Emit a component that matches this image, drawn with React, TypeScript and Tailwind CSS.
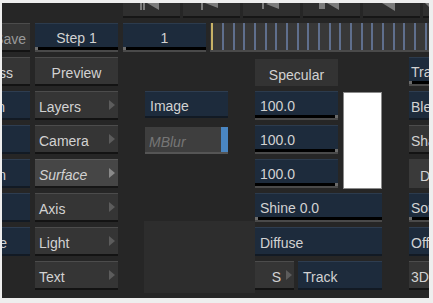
import React from "react";

const font = "font-['Liberation_Sans',Arial,sans-serif] text-[14px] leading-none";
const lbl = "whitespace-nowrap pt-[4px]";

function Arrow({ light = false }: { light?: boolean }) {
  return (
    <svg width="6" height="10" viewBox="0 0 6 10" className="shrink-0">
      <polygon points="0,0 6,5 0,10" fill={light ? "#8a8a8a" : "#5c5c5c"} />
    </svg>
  );
}

function GrayButton({
  label,
  arrow = false,
  active = false,
  className = "",
}: {
  label: string;
  arrow?: boolean;
  active?: boolean;
  className?: string;
}) {
  return (
    <div
      className={`flex items-center justify-between pl-[4px] pr-[3px] border-t border-b-2 ${
        active
          ? "bg-[#464646] border-t-[#5a5a5a] border-b-[#161616] italic"
          : "bg-[#353535] border-t-[#4c4c4c] border-b-[#131313]"
      } ${className}`}
    >
      <span className={lbl}>{label}</span>
      {arrow && <Arrow light={active} />}
    </div>
  );
}

function NavyButton({ label, className = "" }: { label: string; className?: string }) {
  return (
    <div
      className={`flex items-center px-[5px] bg-[#1d2b3c] border-t border-t-[#2e3d50] border-b-2 border-b-[#121a24] ${className}`}
    >
      <span className={lbl}>{label}</span>
    </div>
  );
}

function ValueField({
  label,
  center = false,
  gripRight = false,
  className = "",
}: {
  label: string;
  center?: boolean;
  gripRight?: boolean;
  className?: string;
}) {
  return (
    <div className={`flex flex-col bg-[#1d2b3c] ${className}`}>
      <div
        className={`flex-1 flex items-center border-t border-t-[#2c3b4d] ${
          center ? "justify-center" : "px-[5px]"
        }`}
      >
        <span className={lbl}>{label}</span>
      </div>
      <div className={`h-[3px] bg-black flex ${gripRight ? "justify-end" : ""}`}>
        <div className="w-[3px] h-full bg-[#6a6a6a]" />
      </div>
      <div className="h-[2px] bg-[#4a4a4a]" />
    </div>
  );
}

// clipped on the left side of the window
function EdgeLeft({
  label,
  navy = false,
  dim = false,
  pr,
}: {
  label: string;
  navy?: boolean;
  dim?: boolean;
  pr: string;
}) {
  return (
    <div
      className={`flex items-center justify-end overflow-hidden border-t border-b-2 ${pr} ${
        navy
          ? "bg-[#1d2b3c] border-t-[#2e3d50] border-b-[#121a24]"
          : "bg-[#353535] border-t-[#4c4c4c] border-b-[#131313]"
      } ${dim ? "text-[#9a9a9a]" : ""}`}
    >
      <span className={lbl}>{label}</span>
    </div>
  );
}

// clipped on the right side of the window
function EdgeRight({
  label,
  kind,
  pl = "pl-[2px]",
}: {
  label: string;
  kind: "navy" | "field" | "gray" | "flat";
  pl?: string;
}) {
  if (kind === "field") {
    return (
      <div className="flex flex-col bg-[#1d2b3c] overflow-hidden">
        <div className={`flex-1 flex items-center border-t border-t-[#2c3b4d] ${pl}`}>
          <span className={lbl}>{label}</span>
        </div>
        <div className="h-[3px] bg-black">
          <div className="w-[3px] h-full bg-[#6a6a6a]" />
        </div>
        <div className="h-[2px] bg-[#4a4a4a]" />
      </div>
    );
  }
  const look =
    kind === "navy"
      ? "bg-[#1d2b3c] border-t border-t-[#2e3d50] border-b-2 border-b-[#121a24]"
      : kind === "gray"
      ? "bg-[#353535] border-t border-t-[#4c4c4c] border-b-2 border-b-[#131313]"
      : "bg-[#3a3a3a]";
  return (
    <div className={`flex items-center overflow-hidden ${pl} ${look}`}>
      <span className={lbl}>{label}</span>
    </div>
  );
}

function ToolIcon({ kind }: { kind: number }) {
  const c = "#7c7c7c";
  return (
    <svg width="57" height="13" viewBox="0 0 57 13">
      {kind === 0 && (
        <>
          <rect x="17" y="0" width="2" height="7" fill={c} />
          <rect x="20" y="0" width="2" height="7" fill={c} />
          <polygon points="36,-6 36,7 24,0" fill={c} />
        </>
      )}
      {kind === 1 && (
        <>
          <rect x="18" y="0" width="2" height="7" fill={c} />
          <polygon points="35,-6 35,5 22,0" fill={c} />
        </>
      )}
      {kind === 2 && (
        <>
          <rect x="19" y="0" width="2" height="6" fill={c} />
          <polygon points="36,-5 36,6 23,1" fill={c} />
        </>
      )}
      {kind === 3 && (
        <>
          <rect x="16" y="0" width="6" height="6" fill={c} />
          <polygon points="36,-6 36,7 24,0" fill={c} />
        </>
      )}
      {kind === 4 && <polygon points="32,-6 32,8 19,0" fill={c} />}
      {kind === 5 && <polygon points="10,-6 10,8 2,0" fill={c} />}
    </svg>
  );
}

export default function App() {
  const ticks = Array.from({ length: 20 }, (_, i) => i);

  return (
    <div className={`w-[433px] h-[303px] bg-[#eeeeee] pt-[3px] pl-[2px] ${font} text-[#d2d2d2]`}>
      <div className="w-[427px] h-[295px] bg-[#262626] overflow-hidden flex flex-col">
        {/* transport toolbar, cut off at the top */}
        <div className="flex gap-[3px] pl-[121px] h-[15px] shrink-0">
          {[0, 1, 2, 3, 4, 5].map((k) => (
            <div
              key={k}
              className="w-[57px] shrink-0 h-[15px] bg-[#2f2f2f] border-b-2 border-b-[#161616] overflow-hidden"
            >
              <ToolIcon kind={k} />
            </div>
          ))}
        </div>

        {/* step row */}
        <div className="flex h-[29px] mt-[5px] shrink-0">
          <div className="w-[28px] grid">
            <EdgeLeft label="Save" dim pr="pr-[4px]" />
          </div>
          <ValueField label="Step 1" center className="w-[83px] ml-[5px]" />
          <ValueField label="1" center className="w-[83px] ml-[5px]" />
          <div className="w-[219px] ml-[4px] flex flex-col bg-[#383838]">
            <div className="flex-1 flex">
              <div className="w-[2px] ml-[1px] bg-[#c8b266]" />
              <div className="flex-1 flex justify-between ml-[9px] mr-[2px]">
                {ticks.map((t) => (
                  <div key={t} className="w-[2px] bg-[#5f6f8d]" />
                ))}
              </div>
            </div>
            <div className="h-[2px] bg-[#4a4a4a]" />
          </div>
        </div>

        {/* main grid */}
        <div className="grid grid-cols-[28px_5px_83px_27px_83px_27px_83px_5px_39px_27px_20px] grid-rows-[repeat(7,29px)] gap-y-[5px] mt-[5px]">
          {/* row 3 */}
          <div className="col-start-1 row-start-1 grid">
            <EdgeLeft label="Process" pr="pr-[17px]" />
          </div>
          <div className="col-start-3 row-start-1 flex items-center justify-center bg-[#353535] border-t border-t-[#4c4c4c] border-b-2 border-b-[#131313]">
            <span className={lbl}>Preview</span>
          </div>
          <div className="col-start-7 row-start-1 flex items-center justify-center bg-[#333333] mt-[2px]">
            <span className={lbl}>Specular</span>
          </div>
          <div className="col-start-11 row-start-1 grid">
            <EdgeRight label="Track" kind="field" />
          </div>

          {/* left edge column */}
          <div className="col-start-1 row-start-2 grid">
            <EdgeLeft label="Action" navy pr="pr-[25px]" />
          </div>
          <div className="col-start-1 row-start-3 grid">
            <EdgeLeft label="" navy pr="pr-[4px]" />
          </div>
          <div className="col-start-1 row-start-4 grid">
            <EdgeLeft label="Action" navy pr="pr-[24px]" />
          </div>
          <div className="col-start-1 row-start-5 grid">
            <EdgeLeft label="" navy pr="pr-[4px]" />
          </div>
          <div className="col-start-1 row-start-6 grid">
            <EdgeLeft label="Gauge" navy pr="pr-[23px]" />
          </div>

          {/* node menu */}
          <GrayButton label="Layers" arrow className="col-start-3 row-start-2" />
          <GrayButton label="Camera" arrow className="col-start-3 row-start-3" />
          <GrayButton label="Surface" arrow active className="col-start-3 row-start-4" />
          <GrayButton label="Axis" arrow className="col-start-3 row-start-5" />
          <GrayButton label="Light" arrow className="col-start-3 row-start-6" />
          <GrayButton label="Text" arrow className="col-start-3 row-start-7" />

          {/* middle column */}
          <NavyButton label="Image" className="col-start-5 row-start-2 mb-[2px]" />
          <div className="col-start-5 row-start-3 mt-[2px] flex bg-[#3e3e3e] border-b-2 border-b-[#555555]">
            <div className="flex-1 flex items-center pl-[4px] italic text-[#767676]">
              <span className={lbl}>MBlur</span>
            </div>
            <div className="w-[7px] bg-[#4a86c2]" />
          </div>
          <div className="col-start-5 col-end-7 row-start-6 row-end-8 -mt-[6px] -mb-[3px] -ml-[1px] bg-[#2d2d2d]" />

          {/* specular values */}
          <ValueField label="100.0" gripRight className="col-start-7 row-start-2" />
          <ValueField label="100.0" gripRight className="col-start-7 row-start-3" />
          <ValueField label="100.0" gripRight className="col-start-7 row-start-4" />
          <div className="col-start-9 row-start-2 row-end-5 mt-[1px] mb-[-1px] bg-white border border-[#8a8a8a]" />
          <ValueField label="Shine 0.0" className="col-start-7 col-end-10 row-start-5" />
          <NavyButton label="Diffuse" className="col-start-7 col-end-10 row-start-6" />
          <div className="col-start-7 col-end-10 row-start-7 flex gap-[4px]">
            <div className="w-[39px] flex items-center justify-end gap-[5px] pr-[2px] bg-[#353535] border-t border-t-[#4c4c4c] border-b-2 border-b-[#131313]">
              <span className={lbl}>S</span>
              <Arrow />
            </div>
            <NavyButton label="Track" className="flex-1" />
          </div>

          {/* right edge column */}
          <div className="col-start-11 row-start-2 grid">
            <EdgeRight label="Blend" kind="navy" />
          </div>
          <div className="col-start-11 row-start-3 grid">
            <EdgeRight label="Shadow" kind="gray" />
          </div>
          <div className="col-start-11 row-start-4 grid">
            <EdgeRight label="Diffuse" kind="flat" pl="pl-[11px]" />
          </div>
          <div className="col-start-11 row-start-5 grid">
            <EdgeRight label="Source" kind="field" />
          </div>
          <div className="col-start-11 row-start-6 grid">
            <EdgeRight label="Offset" kind="navy" />
          </div>
          <div className="col-start-11 row-start-7 grid">
            <EdgeRight label="3D" kind="gray" />
          </div>
        </div>
      </div>
    </div>
  );
}
